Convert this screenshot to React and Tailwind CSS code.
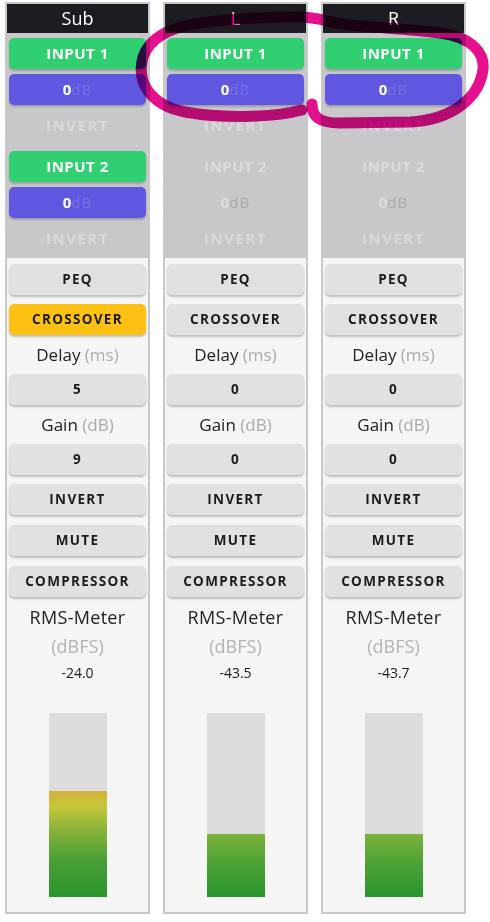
import React from 'react';

const FONT = { fontFamily: '"Open Sans", "Noto Sans", Arial, sans-serif' };

const channels = [
  { name: 'Sub', inputs: [true, true], crossover: true, delay: 5, gain: 9, rms: '-24.0', hot: true },
  { name: 'L', inputs: [true, false], crossover: false, delay: 0, gain: 0, rms: '-43.5' },
  { name: 'R', inputs: [true, false], crossover: false, delay: 0, gain: 0, rms: '-43.7' },
];

const GrayButton = ({ children, active }) => (
  <div
    className={`h-[31px] mx-[2px] rounded-[5px] flex items-center justify-center text-[13.5px] font-bold tracking-[1.3px] text-[#1c1c1c] shadow-[0_2px_2px_rgba(0,0,0,0.22)] ${
      active ? 'bg-[#fdc113]' : 'bg-[#e1e1e1]'
    }`}
  >
    {children}
  </div>
);

const InputGroup = ({ index, enabled }) => (
  <div className="flex flex-col gap-[5px]">
    {enabled ? (
      <>
        <div className="h-[31px] mx-[2px] rounded-[5px] bg-[#2fcf72] flex items-center justify-center text-white text-[15px] font-bold tracking-[0.5px] shadow-[0_2px_2px_rgba(0,0,0,0.2)]">
          INPUT {index}
        </div>
        <div className="h-[31px] mx-[2px] rounded-[5px] bg-[#6156df] flex items-center justify-center text-[15px] font-bold shadow-[0_2px_2px_rgba(0,0,0,0.2)]">
          <span className="text-white">0</span>
          <span className="text-[#7770e6] font-normal tracking-[1px]">dB</span>
        </div>
      </>
    ) : (
      <>
        <div className="h-[31px] flex items-center justify-center text-[#dcdcdd] text-[15px] font-bold tracking-[0.5px]">
          INPUT {index}
        </div>
        <div className="h-[31px] flex items-center justify-center text-[15px]">
          <span className="text-[#dcdcdd] font-bold">0</span>
          <span className="text-[#a9a9ab] tracking-[1px]">dB</span>
        </div>
      </>
    )}
    <div className="h-[31px] flex items-center justify-center text-[#d9d9da] text-[15px] font-bold tracking-[1.5px]">
      INVERT
    </div>
  </div>
);

const Channel = ({ ch }) => (
  <div className="w-[145px] flex flex-col border-2 border-[#c8c8ca]">
    <div className="bg-[#c8c8ca] flex flex-col pb-[4px]">
      <div className="h-[29px] bg-[#1d1c22] flex items-center justify-center text-white text-[18px] font-medium">
        {ch.name}
      </div>
      <div className="flex flex-col gap-[10px] pt-[5px]">
        <InputGroup index={1} enabled={ch.inputs[0]} />
        <InputGroup index={2} enabled={ch.inputs[1]} />
      </div>
    </div>
    <div className="bg-[#f6f5f6] flex flex-col pt-[6px] pb-[15px]">
      <GrayButton>PEQ</GrayButton>
      <div className="mt-[9px]">
        <GrayButton active={ch.crossover}>CROSSOVER</GrayButton>
      </div>
      <div className="h-[39px] flex items-center justify-center text-[17px] text-[#222]">
        Delay&nbsp;<span className="text-[#ababab]">(ms)</span>
      </div>
      <GrayButton>{ch.delay}</GrayButton>
      <div className="h-[39px] flex items-center justify-center text-[17px] text-[#222]">
        Gain&nbsp;<span className="text-[#ababab]">(dB)</span>
      </div>
      <GrayButton>{ch.gain}</GrayButton>
      <div className="mt-[9px]">
        <GrayButton>INVERT</GrayButton>
      </div>
      <div className="mt-[10px]">
        <GrayButton>MUTE</GrayButton>
      </div>
      <div className="mt-[10px]">
        <GrayButton>COMPRESSOR</GrayButton>
      </div>
      <div className="mt-[6px] h-[28px] flex items-center justify-center text-[18px] text-[#222] tracking-[0.3px]">
        RMS-Meter
      </div>
      <div className="h-[30px] flex items-center justify-center text-[18px] text-[#b3b3b3]">
        (dBFS)
      </div>
      <div className="h-[22px] flex items-center justify-center text-[14px] text-[#1c1c1c]">
        {ch.rms}
      </div>
      <div className="mt-[30px] mx-auto w-[58px] h-[184px] bg-[#dcdcdc] flex flex-col justify-end">
        {ch.hot ? (
          <div className="h-[106px] bg-[linear-gradient(to_top,#2a952f_0%,#4a9f35_35%,#86b23a_62%,#c6c73a_86%,#d3b23a_100%)]" />
        ) : (
          <div className="h-[63px] bg-[linear-gradient(to_top,#2a952f_0%,#4ea236_55%,#7db33e_100%)]" />
        )}
      </div>
    </div>
  </div>
);

export default function App() {
  return (
    <div className="relative w-[490px] h-[922px] bg-white" style={FONT}>
      <div className="flex gap-[13px] pl-[5px] pt-[2px]">
        {channels.map(ch => (
          <Channel key={ch.name} ch={ch} />
        ))}
      </div>
      {/* hand-drawn annotation */}
      <svg
        className="absolute left-0 top-0 pointer-events-none mix-blend-multiply"
        width="490"
        height="140"
        viewBox="0 0 490 140"
      >
        <path
          d="M 312 104 C 312 116, 318 123, 340 123 L 410 122 C 450 120, 476 100, 482 75 C 488 52, 470 37, 440 33 C 410 29, 380 28, 350 25 C 330 23, 318 17, 300 17 C 260 17, 230 19, 200 23 C 170 27, 150 37, 143 57 C 136 82, 150 105, 185 112 C 230 120, 280 116, 302 110"
          fill="none"
          stroke="#e4108e"
          strokeWidth="11"
          strokeLinecap="round"
          strokeLinejoin="round"
        />
      </svg>
    </div>
  );
}
